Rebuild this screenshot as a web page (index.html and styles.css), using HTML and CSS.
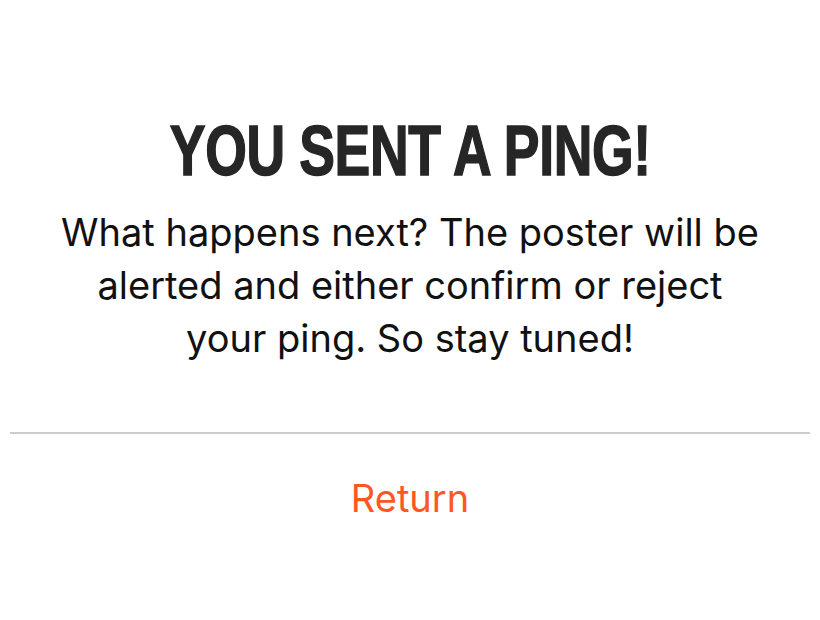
FILE: index.html
```html
<!DOCTYPE html>
<html>
<head>
<meta charset="utf-8">
<link rel="stylesheet" href="styles.css">
</head>
<body>
<div class="dialog">
  <div class="content">
    <h1 class="title">YOU SENT A PING!</h1>
    <p class="message">What happens next? The poster will be alerted and either confirm or reject your ping. So stay tuned!</p>
  </div>
  <div class="divider"></div>
  <div class="actions">
    <button class="return">Return</button>
  </div>
</div>
</body>
</html>
```
FILE: styles.css
```css
html, body {
  margin: 0;
  padding: 0;
  background: #fff;
}
.dialog {
  width: 820px;
  height: 620px;
  box-sizing: border-box;
  padding: 0 10px;
  display: flex;
  flex-direction: column;
}
.content {
  padding-top: 116px;
  display: flex;
  flex-direction: column;
  align-items: center;
}
.title {
  margin: 0;
  font-family: "Liberation Sans", Arial, sans-serif;
  font-weight: 700;
  font-size: 70px;
  line-height: 70px;
  letter-spacing: -0.5px;
  color: #262626;
  -webkit-text-stroke: 1.5px #262626;
  transform: scaleX(0.765);
  white-space: nowrap;
}
.message {
  margin: 20px 0 0;
  width: 700px;
  text-align: center;
  font-family: Inter, sans-serif;
  font-size: 38px;
  line-height: 53px;
  color: #111;
}
.divider {
  margin-top: 67px;
  height: 2px;
  background: #cccccc;
}
.actions {
  display: flex;
  justify-content: center;
  padding-top: 38px;
}
.return {
  border: 0;
  background: none;
  padding: 0;
  font-family: Inter, sans-serif;
  font-size: 38px;
  line-height: 53px;
  color: #ff5722;
  cursor: pointer;
}
```
